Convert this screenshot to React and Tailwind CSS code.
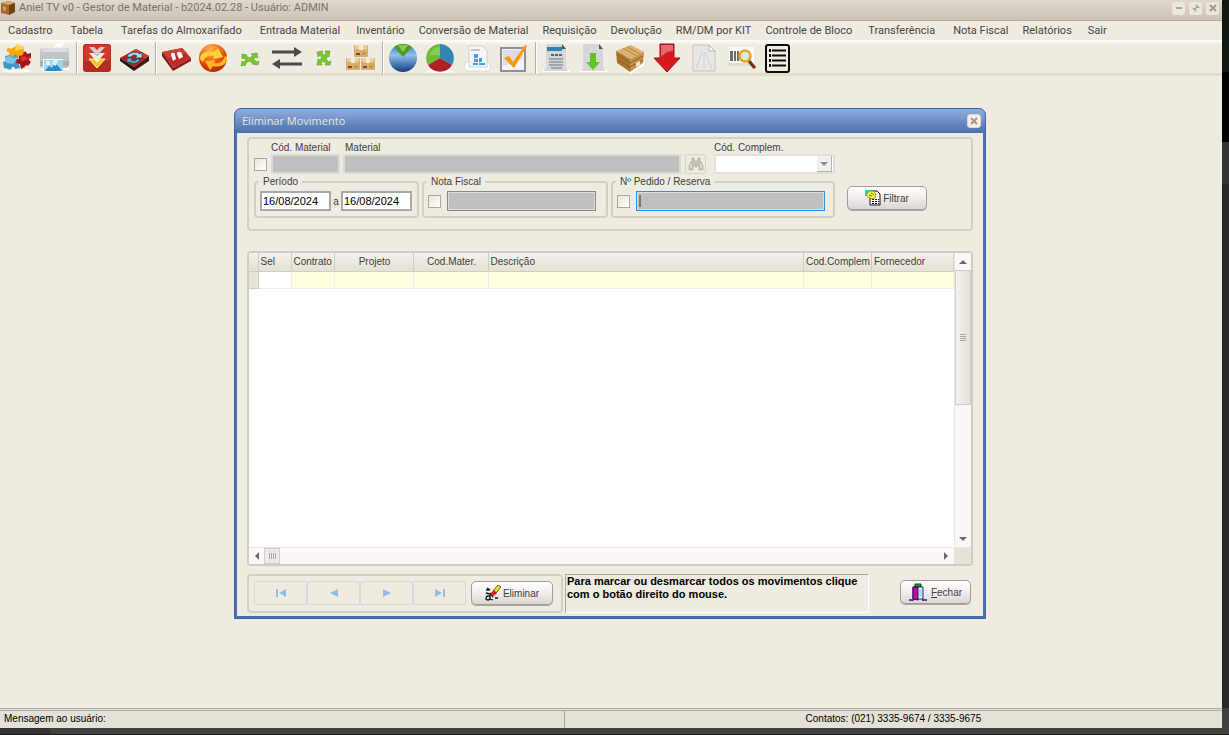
import React, { useState } from "react";

const menuItems = [
  { label: "Cadastro", gap: "mr-[18px]" },
  { label: "Tabela", gap: "mr-[18px]" },
  { label: "Tarefas do Almoxarifado", gap: "mr-[18px]" },
  { label: "Entrada Material", gap: "mr-4" },
  { label: "Inventário", gap: "mr-[14px]" },
  { label: "Conversão de Material", gap: "mr-[14px]" },
  { label: "Requisição", gap: "mr-[14px]" },
  { label: "Devolução", gap: "mr-[14px]" },
  { label: "RM/DM por KIT", gap: "mr-[14px]" },
  { label: "Controle de Bloco", gap: "mr-4" },
  { label: "Transferência", gap: "mr-[18px]" },
  { label: "Nota Fiscal", gap: "mr-[14px]" },
  { label: "Relatórios", gap: "mr-4" },
  { label: "Sair", gap: "" },
];

const columns = [
  { label: "Sel", width: "w-[33px]", align: "text-left" },
  { label: "Contrato", width: "w-[43px]", align: "text-left" },
  { label: "Projeto", width: "w-[79px]", align: "text-center" },
  { label: "Cod.Mater.", width: "w-[75px]", align: "text-center" },
  { label: "Descrição", width: "", align: "text-left" },
  { label: "Cod.Complem.", width: "w-[68px]", align: "text-left" },
  { label: "Fornecedor", width: "w-[82px]", align: "text-left" },
];

const Svg = ({ children }) => (
  <svg viewBox="0 0 32 32" className="size-8" aria-hidden="true">
    {children}
  </svg>
);

const PuzzleIcon = () => (
  <Svg>
    <ellipse cx="15" cy="29" rx="14" ry="1.5" fill="#fff" />
    <path d="M14 4c1-2 4-2 4 1l3-1 1 5c2 0 3 3 0 4l-4 1c0 3-4 3-4 0l-6 1-1-5c-3 1-3-4 0-4l2 1z" fill="#f5a800" />
    <path d="M14 4c1-2 4-2 4 1l3-1v3l-8 2z" fill="#ffd14d" />
    <path d="M2 26 1 20l3-1-1-5 5-1c2 3 5 2 4-1l3 2 1 4c2-1 3 3 1 4l1 4-5 1c0-3-4-3-4 1l-6-2z" fill="#3d98c6" />
    <path d="M3 15l5-1 3 2 4-1v2l-4 5-7-1z" fill="#7fc4e4" />
    <path d="M17 14l4-1c0-4 4-4 4-1l4-1v5c-3 0-2 3 0 4l-3 4c-1-2-4 0-3 1l-4 2-1-5-4-1c1-3 0-4 3-4z" fill="#a5121a" />
    <path d="M18 15l5-1 2 2 3-2v2l-8 4z" fill="#d62f35" />
  </Svg>
);

const PrinterIcon = () => (
  <Svg>
    <path d="M18 1h7l-3 4h-7z" fill="#fff" />
    <path d="M3 25h27v3H3z" fill="#fff" />
    <rect x="1" y="6" width="29" height="20" rx="3" fill="#c3c4c8" />
    <path d="M3 6h25l1 4H2z" fill="#dcdde0" />
    <path d="M1 19h29v5H1z" fill="#adaeb3" />
    <rect x="4" y="17" width="20" height="13" fill="#f4fbfd" />
    <rect x="5" y="18" width="19" height="11" fill="#9bd6ec" />
    <path d="m6 29 4-5 3 2 3-6 7 9z" fill="#2c8bc2" />
    <path d="M15 17l4 1-2 6-4-2z" fill="#dff5fd" />
    <path d="M7 19h4v4H7z" fill="#e6f7fc" />
  </Svg>
);

const ChevronsIcon = () => (
  <Svg>
    <rect x="2" y="2" width="28" height="28" rx="3" fill="#b92a20" />
    <rect x="3" y="3" width="26" height="16" rx="2" fill="#d0392b" />
    <path d="M8 5h5l3 3 3-3h5l-8 9z" fill="#cfcfcf" />
    <path d="M8 11h5l3 3 3-3h5l-8 9z" fill="#ececec" />
    <path d="M8 17h5l3 3 3-3h5l-8 9z" fill="#f4c51f" stroke="#fff3a6" />
  </Svg>
);

const RefreshBoxIcon = () => (
  <Svg>
    <path d="M2 16 18 7l13 7-15 11z" fill="#b3201b" />
    <path d="M2 16l14 9v4L2 19z" fill="#241616" />
    <path d="M31 14 16 25v4l15-10z" fill="#4a1514" />
    <path d="M18 7l13 7-4 2-14-6z" fill="#cf3d35" />
    <path d="M9 15c1-5 10-6 13-3l2-2v6h-7l2-2c-2-2-5-1-6 1z" fill="#a6dcee" stroke="#123b50" strokeWidth="0.7" />
    <path d="M22 17c-1 5-8 5-11 3l-2 1v-5h6l-2 2c2 1 5 1 6-1z" fill="#57b0d2" stroke="#123b50" strokeWidth="0.7" />
  </Svg>
);

const RedBoxIcon = () => (
  <Svg>
    <path d="M2 10 22 6l9 10-18 10z" fill="#bf2b26" />
    <path d="M2 10l11 16v3L2 14z" fill="#6f1412" />
    <path d="M31 16 13 26v3l18-10z" fill="#8b1b18" />
    <path d="M3 10 22 6l5 5-19 5z" fill="#cd4039" />
    <path d="M11 13c0-3 4-3 4 0l1 4-3 2zM17 12c0-3 4-3 5 0l1 3-4 2z" fill="#fff" />
  </Svg>
);

const OrangeBallIcon = () => (
  <Svg>
    <defs>
      <radialGradient id="ball" cx="0.4" cy="0.2" r="0.9">
        <stop offset="0" stopColor="#ffb14a" />
        <stop offset="0.5" stopColor="#ee5f10" />
        <stop offset="1" stopColor="#a81208" />
      </radialGradient>
    </defs>
    <circle cx="16" cy="16" r="14" fill="url(#ball)" />
    <path d="M3 17c0-6 7-9 14-7l4-4 5 9-10 2 1-3C12 13 8 14 6 20z" fill="#ffd23c" />
    <path d="M30 15c1 7-6 11-14 9l-3 4-5-9 10-1-1 3c5 1 9-1 11-7z" fill="#ffb624" />
  </Svg>
);

const CrossArrowsIcon = () => (
  <Svg>
    <path d="M8 12l5 1-1 1 4 2 3-3-2-1 6-1 1 5-2-1-3 2 4 3 2-1-1 4-6-1 1-1-4-2-4 3 1 1-5 1 1-5 1 1 4-2-4-2-1 1z" fill="#7ac62c" stroke="#54a31a" strokeWidth="0.6" />
  </Svg>
);

const CrossArrowsUpIcon = () => (
  <Svg>
    <path d="m9 10 6-1-1 2 2 3 2-4-1-1 5 0-1 6-1-1-2 3 3 3 2-1-1 4-5 0 1-2-3-2-2 2 1 2-5 0 1-6 1 1 3-2-2-3-2 2z" fill="#7ac62c" stroke="#54a31a" strokeWidth="0.6" />
  </Svg>
);

const SwapIcon = () => (
  <Svg>
    <path d="M1 8.500h22V5l8 5-8 5v-3.500H1zM31 20.500H9V17l-8 5 8 5v-3.500h22z" fill="#4b4b4b" />
  </Svg>
);

const BoxesIcon = () => (
  <Svg>
    {[
      [9, 3],
      [1, 16],
      [16, 16],
    ].map(([x, y]) => (
      <g key={x}>
        <rect x={x} y={y} width="14" height="12" rx="1" fill="#d9ae6c" />
        <rect x={x + 1} y={y} width="12" height="4" fill="#ecd0a0" />
        <rect x={x + 5} y={y} width="4" height="5" fill="#f8ead0" />
        <rect x={x + 2} y={y + 8} width="4" height="2" fill="#6b5334" />
        <rect x={x + 8} y={y + 7} width="4" height="3" fill="#c79754" />
      </g>
    ))}
  </Svg>
);

const BlueBallIcon = () => (
  <Svg>
    <defs>
      <linearGradient id="blueBall" x1="0" y1="0" x2="0" y2="1">
        <stop offset="0" stopColor="#3c78b8" />
        <stop offset="0.4" stopColor="#8fc0e8" />
        <stop offset="1" stopColor="#0f3c86" />
      </linearGradient>
    </defs>
    <circle cx="16" cy="16" r="14" fill="url(#blueBall)" />
    <path d="M7 5c5-4 13-4 18 0l-9 10z" fill="#4f9a20" />
    <path d="M11 3h10l-5 7z" fill="#8ccb4b" />
  </Svg>
);

const PieIcon = () => (
  <Svg>
    <ellipse cx="16" cy="29" rx="13" ry="2" fill="#fff" />
    <path d="M16 16V2a14 14 0 0 1 12 21z" fill="#3386b3" />
    <path d="M16 16V2A14 14 0 0 0 4 23z" fill="#6cbb32" />
    <path d="M16 16 4 23a14 14 0 0 0 24 0z" fill="#ad2026" />
    <path d="M16 13V5A11 11 0 0 0 5 14c4-2 7 0 11-1z" fill="#96db58" opacity="0.6" />
  </Svg>
);

const ReportIcon = () => (
  <Svg>
    <path d="M4 20h24l2 6-3 3H6l-3-3z" fill="#fbfbfb" stroke="#d9d9d9" />
    <path d="M8 4h13l5 4v17H8z" fill="#f4f6f7" stroke="#cfd3d5" />
    <path d="M10 7h9v2h-9z" fill="#c2c7ca" />
    <path d="M13 12h4v4h-4zM13 17h4v3h-4zM18 16h3v4h-3zM12 21h5v2h-5zM18 21h6v2h-6z" fill="#35a8df" />
  </Svg>
);

const CheckIcon = () => (
  <Svg>
    <rect x="3" y="6" width="24" height="23" fill="#f3f3f5" stroke="#8f9096" strokeWidth="2" />
    <path d="M5 8h20v9L5 24z" fill="#dcdde2" />
    <path d="M6 16l5-2 4 6L27 3l2 1-13 22z" fill="#ff9800" />
  </Svg>
);

const Page = ({ children }) => (
  <Svg>
    <path d="M3 29h27" stroke="#fff" strokeWidth="2" />
    <path d="M6 2h16l4 5v18l2 4H4l2-4z" fill="#d5d7da" />
    <path d="M22 2l4 5h-4z" fill="#4e565d" />
    {children}
  </Svg>
);

const DocIcon = () => (
  <Page>
    <path d="M7 5h15v4H7z" fill="#2f84ad" />
    <path d="M11 12h3v2h-3zM15 12h3v2h-3zM19 12h3v2h-3z" fill="#59646c" />
    <path d="M9 17h14M9 20h14M9 23h14M11 26h11" stroke="#8d959c" strokeWidth="1.400" />
  </Page>
);

const DownloadIcon = () => (
  <Page>
    <path d="M13 11h6v9h4l-7 8-7-8h4z" fill="#5fc41f" />
  </Page>
);

const CrateIcon = () => (
  <Svg>
    <path d="M1 20l16 12 13-9v-5L17 29z" fill="#fff" />
    <path d="M2 9 17 3l13 7-14 7z" fill="#dcb06e" />
    <path d="M2 9l14 8v13L3 21z" fill="#a97531" />
    <path d="M30 10 16 17v13l13-9z" fill="#c4914c" />
    <path d="m3 13 13 8 13-7M3 17l13 8 13-7" fill="none" stroke="#8d5f22" />
    <path d="m9 6 14 8M13 5l13 7" stroke="#b58141" />
    <path d="m22 21 4-2v4l-4 2z" fill="#f1e6cf" />
  </Svg>
);

const RedArrowIcon = () => (
  <Svg>
    <path d="M9 2h14v14h6L16 30 3 16h6z" fill="#d6191f" stroke="#9d1015" />
    <path d="M10 3h12v6c-5 0-8 2-12 6z" fill="#e8686b" />
  </Svg>
);

const BlankPageIcon = () => (
  <Svg>
    <path d="M5 3h16l6 6v20H5z" fill="#e7e8e6" stroke="#c4c5c3" />
    <path d="M21 3v6h6z" fill="#fafafa" stroke="#b5b5b5" />
    <path d="M14 10 8 27M17 10l7 17M16 12v15" stroke="#c4c6c3" strokeDasharray="2 1" fill="none" />
  </Svg>
);

const BarcodeIcon = () => (
  <Svg>
    <path d="M4 5h25v16l-3 3H4z" fill="#fbfbfb" />
    <path d="M3 21h24v3H3z" fill="#dedede" />
    <path d="M5 9h3v10H5zM9 9h2v10H9zM12 9h2v10h-2z" fill="#6e6e6e" />
    <path d="m24 19 5 6" stroke="#7a3412" strokeWidth="3.500" strokeLinecap="round" />
    <circle cx="20" cy="14" r="5.500" fill="#dbe7ef" stroke="#e8a51a" strokeWidth="2.500" />
  </Svg>
);

const ListIcon = () => (
  <Svg>
    <rect x="4" y="3" width="23" height="27" rx="2" fill="#efece2" stroke="#0c0c0c" strokeWidth="2" />
    <path d="M10 8.500h14M10 13.500h14M10 18.500h14M10 23.500h14" stroke="#0c0c0c" strokeWidth="2.200" />
    <path d="M7 7h2v3H7zM7 12h2v3H7zM7 17h2v3H7zM7 22h2v3H7z" fill="#0c0c0c" />
  </Svg>
);

const toolbarGroups = [
  [
    { name: "Cadastro de material", Icon: PuzzleIcon },
    { name: "Imprimir", Icon: PrinterIcon },
  ],
  [
    { name: "Entrada", Icon: ChevronsIcon },
    { name: "Atualizar estoque", Icon: RefreshBoxIcon },
  ],
  [
    { name: "Saída", Icon: RedBoxIcon },
    { name: "Converter", Icon: OrangeBallIcon },
    { name: "Cruzar dados", Icon: CrossArrowsIcon },
    { name: "Transferir", Icon: SwapIcon },
    { name: "Cruzar reservas", Icon: CrossArrowsUpIcon },
    { name: "Estoque", Icon: BoxesIcon },
  ],
  [
    { name: "Consulta", Icon: BlueBallIcon },
    { name: "Gráfico", Icon: PieIcon },
    { name: "Relatório", Icon: ReportIcon },
    { name: "Conferir", Icon: CheckIcon },
  ],
  [
    { name: "Documento", Icon: DocIcon },
    { name: "Baixar", Icon: DownloadIcon },
    { name: "Caixa", Icon: CrateIcon },
    { name: "Devolver", Icon: RedArrowIcon },
    { name: "Página", Icon: BlankPageIcon },
    { name: "Código de barras", Icon: BarcodeIcon },
    { name: "Lista", Icon: ListIcon },
  ],
];

const CloseGlyph = () => (
  <svg viewBox="0 0 8 8" className="size-2" aria-hidden="true">
    <path d="M1 1l6 6M7 1L1 7" stroke="#a19b8a" strokeWidth="2" />
  </svg>
);

const TitleButton = ({ label, children }) => (
  <button
    aria-label={label}
    className="size-[13px] rounded-[3px] bg-[#ebe7dc] flex items-center justify-center"
  >
    {children}
  </button>
);

const TitleBar = () => (
  <header className="h-[21px] flex items-center pr-[3px] bg-linear-to-b from-[#ded8cd] to-[#cbc5b7] border-b border-[#b4afa2]">
    <svg viewBox="0 0 16 16" className="size-4 -mt-[5px]" aria-hidden="true">
      <path d="M1 3 9 1l6 2v9l-6 3-8-2z" fill="#a8682a" />
      <path d="M1 3 9 1l6 2-6 2z" fill="#dba765" />
      <path d="M9 5l6-2v9l-6 3z" fill="#70400f" />
      <path d="M3 6l3 1v4l-3-1z" fill="#d59a55" />
    </svg>
    <h1 className="ml-[3px] pb-[5px] flex-1 text-[11px] leading-4 text-[#77736b] whitespace-nowrap">
      Aniel TV v0 - Gestor de Material - b2024.02.28 - Usuário: ADMIN
    </h1>
    <div className="flex gap-1 pb-1">
      <TitleButton label="Minimizar">
        <span className="w-1.5 h-0.5 bg-[#aaa496]" />
      </TitleButton>
      <TitleButton label="Restaurar">
        <svg viewBox="0 0 8 8" className="size-2" aria-hidden="true">
          <path d="M4 0v4h4zM0 4h4v4z" fill="#aaa496" />
          <path d="M2 6l4-4" stroke="#aaa496" strokeWidth="1.500" />
        </svg>
      </TitleButton>
      <TitleButton label="Fechar janela">
        <CloseGlyph />
      </TitleButton>
    </div>
  </header>
);

const MenuBar = () => (
  <nav className="h-[19px] flex items-center pl-2 text-[11px] leading-4 text-[#454545] whitespace-nowrap">
    {menuItems.map((item) => (
      <a key={item.label} href="#" className={item.gap}>
        {item.label}
      </a>
    ))}
  </nav>
);

const Toolbar = () => (
  <div className="h-9 pt-0.5 flex items-center bg-linear-to-b from-white via-[#efebe0] via-15% to-[#efebe0] border-b-3 border-[#e0dcd0]">
    {toolbarGroups.map((group, index) => (
      <div key={index} className="flex items-center">
        {index > 0 && <span className="w-0.5 h-8 ml-0.5 mr-px bg-[#b4b2ad] border-r border-white" />}
        {group.map(({ name, Icon }) => (
          <button key={name} aria-label={name} className="w-[37px] h-8 pr-0.5 flex items-center justify-center">
            <Icon />
          </button>
        ))}
      </div>
    ))}
  </div>
);

const CheckBox = ({ label }) => (
  <input
    type="checkbox"
    aria-label={label}
    className="appearance-none size-[13px] shrink-0 border border-[#aaa79e] bg-linear-to-br from-[#ece4d6] to-white"
  />
);

const GroupBox = ({ title, className, children }) => (
  <fieldset className={`h-[42px] border-2 border-[#d3cfc4] rounded-[4px] ${className}`}>
    <legend className="ml-[3px] px-1 h-3 leading-3">{title}</legend>
    <div className="flex items-center pl-1 pt-[3px]">{children}</div>
  </fieldset>
);

const buttonClass =
  "h-6 flex items-center justify-center border border-[#a19d9a] rounded-[5px] bg-linear-to-b from-white via-[#f1edec] to-[#dcd6d2] shadow-[0_1px_0_#aaa6a2]";

const Filters = ({ period, setPeriod }) => (
  <section className="h-[94px] border-2 border-[#d3cfc4] rounded-[4px] pl-[5px] pt-px">
    <div className="flex items-end">
      <div className="h-4">
        <CheckBox label="Filtrar por material" />
      </div>
      <label className="ml-1 w-[69px]">
        <span className="block h-3.5 leading-4">Cód. Material</span>
        <input disabled className="block w-full h-5 bg-[#c0c0c0] border-2 border-[#dcdad4]" />
      </label>
      <label className="ml-[3px] w-[338px]">
        <span className="block h-3.5 leading-4 pl-0.5">Material</span>
        <input disabled className="block w-full h-5 bg-[#c0c0c0] border-2 border-[#dcdad4]" />
      </label>
      <button
        disabled
        aria-label="Localizar material"
        className="ml-1 w-[21px] h-5 border border-[#d8d4c9] rounded-[2px] flex items-center justify-center"
      >
        <svg viewBox="0 0 16 14" className="w-4 h-3.5" aria-hidden="true">
          <path
            d="M4 1h2v2h1v2h2V3h1V1h2v2l3 6v4h-4V8H9v2H7V8H5v5H1V9l3-6z"
            fill="#c5c1b2"
            stroke="#b3b0a3"
            strokeWidth="0.8"
          />
          <path d="M3 7v4M13 7v4" stroke="#efebe0" />
        </svg>
      </button>
      <label className="ml-2 w-[121px]">
        <span className="block h-3.5 leading-4">Cód. Complem.</span>
        <span className="relative block">
          <select
            disabled
            className="appearance-none block w-full h-5 bg-white border-2 border-[#e2dfd6] rounded-[3px]"
          />
          <span className="absolute right-[3px] top-0.5 w-[15px] h-4 bg-[#f1f0ee] border-r border-b border-[#b5b3ae] flex items-center justify-center">
            <svg viewBox="0 0 8 4" className="w-2 h-1" aria-hidden="true">
              <path d="M0 0h8L4 4z" fill="#8b8b8b" />
            </svg>
          </span>
        </span>
      </label>
    </div>
    <div className="flex items-end mt-0.5">
      <GroupBox title="Período" className="w-[165px]">
        <input
          aria-label="Data inicial"
          value={period.start}
          onChange={(e) => setPeriod({ ...period, start: e.target.value })}
          className="w-[71px] h-5 pl-px bg-white text-[11px] text-black border-2 border-[#a9a9a5]"
        />
        <span className="w-2.5 text-center">a</span>
        <input
          aria-label="Data final"
          value={period.end}
          onChange={(e) => setPeriod({ ...period, end: e.target.value })}
          className="w-[71px] h-5 pl-px bg-white text-[11px] text-black border-2 border-[#a9a9a5]"
        />
      </GroupBox>
      <GroupBox title="Nota Fiscal" className="ml-[3px] w-[186px]">
        <CheckBox label="Filtrar por nota fiscal" />
        <input
          disabled
          aria-label="Nota Fiscal"
          className="ml-1.5 w-[149px] h-5 bg-[#c0c0c0] border border-[#88888a] shadow-[inset_0_0_0_1px_#dedede]"
        />
      </GroupBox>
      <GroupBox title="Nº Pedido / Reserva" className="ml-[3px] w-[224px]">
        <CheckBox label="Filtrar por pedido ou reserva" />
        <div className="ml-1.5 w-[189px] h-5 flex items-center pl-0.5 bg-[#c0c0c0] border border-[#2f8ee0] shadow-[inset_0_0_0_1px_#dedede]">
          <span className="w-0.5 h-3 bg-[#777]" />
          <input aria-label="Nº Pedido / Reserva" className="w-full h-4 outline-none" />
        </div>
      </GroupBox>
      <button className={`ml-3 mb-2 w-20 gap-0.5 ${buttonClass}`}>
        <svg viewBox="0 0 16 16" className="size-4" aria-hidden="true">
          <path d="M0 0h6v2L2 6H0z" fill="#14d4de" />
          <path d="M6 1h6l3 3v11H5V6z" fill="#fff" stroke="#111" />
          <path d="M7 9.500h7M7 11.500h7M7 13.500h7" stroke="#111" strokeDasharray="2 1" />
          <path d="M1 5l3-4h4l3 3-1 4-3 1-4-2z" fill="#f4f03a" stroke="#8a8600" strokeWidth="0.8" />
          <path d="M4 5l3 1M6 3l3 2" stroke="#6d6a00" strokeWidth="0.8" />
        </svg>
        Filtrar
      </button>
    </div>
  </section>
);

const Arrow = ({ d }) => (
  <svg viewBox="0 0 8 8" className="size-2" aria-hidden="true">
    <path d={d} fill="#6c6a68" />
  </svg>
);

const Grid = () => (
  <section className="h-[315px] mt-5 flex flex-col bg-white border-2 border-[#cfccc3] rounded-[4px] overflow-hidden">
    <div className="flex-1 flex min-h-0">
      <div className="flex-1 min-w-0">
        <table className="w-full table-fixed border-collapse">
          <thead>
            <tr className="h-[18px] bg-linear-to-b from-[#f3f1ea] to-[#e4e1d5]">
              <th className="w-[9px] border-r border-b border-[#d0cdc2]" />
              {columns.map((col) => (
                <th
                  key={col.label}
                  className={`p-0 pl-0.5 font-normal leading-4 whitespace-nowrap overflow-hidden border-r border-b border-[#d0cdc2] ${col.width} ${col.align}`}
                >
                  {col.label}
                </th>
              ))}
            </tr>
          </thead>
          <tbody>
            <tr className="h-[17px]">
              <td className="bg-[#e6e3d9] border-r border-b border-[#d0cdc2]" />
              {columns.map((col, index) => (
                <td
                  key={col.label}
                  className={`border-r border-b border-[#efeee4] ${index === 0 ? "bg-white" : "bg-[#ffffe1]"}`}
                />
              ))}
            </tr>
          </tbody>
        </table>
      </div>
      <div className="w-[17px] flex flex-col items-center bg-[#fbf7f8] border-l border-[#eae6e2]">
        <button aria-label="Rolar para cima" className="h-[17px]">
          <Arrow d="M0 6h8L4 2z" />
        </button>
        <div className="w-full h-[135px] flex flex-col items-center justify-center gap-px bg-linear-to-r from-[#f5f1ec] to-[#e6dfda] border border-[#d2cdc7]">
          <span className="w-1.5 h-px bg-[#a9a9a9]" />
          <span className="w-1.5 h-px bg-[#a9a9a9]" />
          <span className="w-1.5 h-px bg-[#a9a9a9]" />
          <span className="w-1.5 h-px bg-[#a9a9a9]" />
        </div>
        <button aria-label="Rolar para baixo" className="h-[17px] mt-auto">
          <Arrow d="M0 2h8L4 6z" />
        </button>
      </div>
    </div>
    <div className="h-[17px] flex items-center bg-[#fbf7f8] border-t border-[#eae6e2]">
      <button aria-label="Rolar para a esquerda" className="w-[15px] flex justify-center">
        <Arrow d="M6 0v8L2 4z" />
      </button>
      <div className="w-4 h-4 flex items-center justify-center gap-px bg-[#f0e9e4] border border-[#d2cdc7]">
        <span className="w-px h-1.5 bg-[#a9a9a9]" />
        <span className="w-px h-1.5 bg-[#a9a9a9]" />
        <span className="w-px h-1.5 bg-[#a9a9a9]" />
        <span className="w-px h-1.5 bg-[#a9a9a9]" />
      </div>
      <button aria-label="Rolar para a direita" className="ml-auto w-4 flex justify-center">
        <Arrow d="M2 0v8l4-4z" />
      </button>
      <span className="w-[17px] h-full bg-[#e5e2d6]" />
    </div>
  </section>
);

const navButtons = [
  { label: "Primeiro", d: "M1 1h2v8H1zM11 1v8L4 5z" },
  { label: "Anterior", d: "M10 1v8L2 5z" },
  { label: "Próximo", d: "M2 1v8l8-4z" },
  { label: "Último", d: "M9 1h2v8H9zM1 1v8l7-4z" },
];

const Actions = () => (
  <footer className="mt-2 flex items-start">
    <div className="w-[316px] h-[39px] pl-[5px] pb-px flex items-center border-2 border-[#d3cfc4] rounded-[4px]">
      {navButtons.map((nav) => (
        <button
          key={nav.label}
          disabled
          aria-label={nav.label}
          className="w-[53px] h-6 flex items-center justify-center border border-[#dad8d2] rounded-[2px]"
        >
          <svg viewBox="0 0 12 10" className="w-3 h-2.5" aria-hidden="true">
            <path d={nav.d} fill="#92bee6" />
          </svg>
        </button>
      ))}
      <button className={`ml-[5px] w-[82px] gap-0.5 ${buttonClass}`}>
        <svg viewBox="0 0 16 16" className="size-4" aria-hidden="true">
          <path d="M13 0l3 2-5 6-3-2z" fill="#f2ea20" stroke="#3a3600" strokeWidth="0.8" />
          <path d="M9 5l3 3-3 3-3-3z" fill="#e01515" />
          <path d="M1 5h3M2 3l3 2M1 8l4 1M1 14c0-4 4-4 4-1s-4 2-4 1M5 10v4l3 1M10 13h3M5 8l3 4" fill="none" stroke="#111" strokeWidth="1.300" />
        </svg>
        Eliminar
      </button>
    </div>
    <p className="ml-0.5 w-[304px] h-[39px] pl-px border-t border-l border-[#aaa79f] border-r-white border-b-white border-r border-b text-[11px] leading-[13px] font-bold text-black">
      Para marcar ou desmarcar todos os movimentos clique com o botão direito do mouse.
    </p>
    <button className={`ml-auto mr-0.5 mt-1.5 w-[71px] gap-1 ${buttonClass}`}>
      <svg viewBox="0 0 18 18" className="size-[18px]" aria-hidden="true">
        <path d="M6 1h6v3H6z" fill="#1c9a2a" stroke="#0b4d12" />
        <path d="M4 4h10v12H4z" fill="#fff" stroke="#1a1a80" />
        <path d="M4 4h5v13l-5-1z" fill="#b512a6" stroke="#3f063a" />
        <path d="M10 6h3v8h-3z" fill="#9be6ee" />
        <path d="M0 17h5M13 17h5" stroke="#1717a8" strokeWidth="1.500" />
      </svg>
      <span>
        <u>F</u>echar
      </span>
    </button>
  </footer>
);

const EliminarMovimento = () => {
  const [period, setPeriod] = useState({ start: "16/08/2024", end: "16/08/2024" });

  return (
    <div
      role="dialog"
      aria-label="Eliminar Movimento"
      className="w-[752px] max-w-full mx-auto mt-8 rounded-t-[7px] bg-[#4b70ae] border border-[#3f62a0] overflow-hidden"
    >
      <div className="h-6 flex items-center justify-between pl-[7px] pr-1 bg-linear-to-b from-[#93aedd] to-[#4a6fae]">
        <h2 className="text-[11px] leading-4 font-['Open_Sans',sans-serif] text-[#e9e6da]">Eliminar Movimento</h2>
        <button
          aria-label="Fechar diálogo"
          className="size-3.5 flex items-center justify-center rounded-[3px] bg-[#f3f0e8] border border-[#d9d6cd]"
        >
          <CloseGlyph />
        </button>
      </div>
      <div className="mx-0.5 mb-0.5 px-2.5 pt-1 pb-[3px] bg-[#efebe0] font-['Liberation_Sans',sans-serif] text-[10px] text-[#3d3d3d]">
        <Filters period={period} setPeriod={setPeriod} />
        <Grid />
        <Actions />
      </div>
    </div>
  );
};

const StatusBar = () => (
  <footer className="h-5 flex border-t border-[#aaa7a2] bg-[#e5e1d6] font-['Liberation_Sans',sans-serif] text-[10px] leading-4 text-black">
    <div className="flex-[46] mt-px pl-1 border-t border-[#b1a9b4] border-r border-r-[#a5a39d]">
      Mensagem ao usuário:
    </div>
    <div className="flex-[54] mt-px text-center border-t border-[#b1a9b4]">
      Contatos: (021) 3335-9674 / 3335-9675
    </div>
  </footer>
);

const App = () => (
  <div className="min-h-screen flex flex-col bg-[#404040] font-[Roboto,sans-serif]">
    <div className="flex-1 flex">
      <div className="flex-1 min-w-0 flex flex-col bg-[#efebe0]">
        <TitleBar />
        <MenuBar />
        <Toolbar />
        <main className="flex-1 pr-0.5">
          <EliminarMovimento />
        </main>
        <StatusBar />
      </div>
      <div className="w-[7px] flex flex-col">
        <span className="h-18 bg-[#111a12]" />
        <span className="h-[70px] bg-black" />
        <span className="h-[42px] bg-[#333]" />
        <span className="flex-1 bg-[#282828]" />
        <span className="h-5 bg-[#404040]" />
      </div>
    </div>
    <div className="h-[7px] bg-[#404040] border-b border-[#1c1c1c]">
      <div className="w-[50px] h-full bg-[#343434]" />
    </div>
  </div>
);

export default App;
